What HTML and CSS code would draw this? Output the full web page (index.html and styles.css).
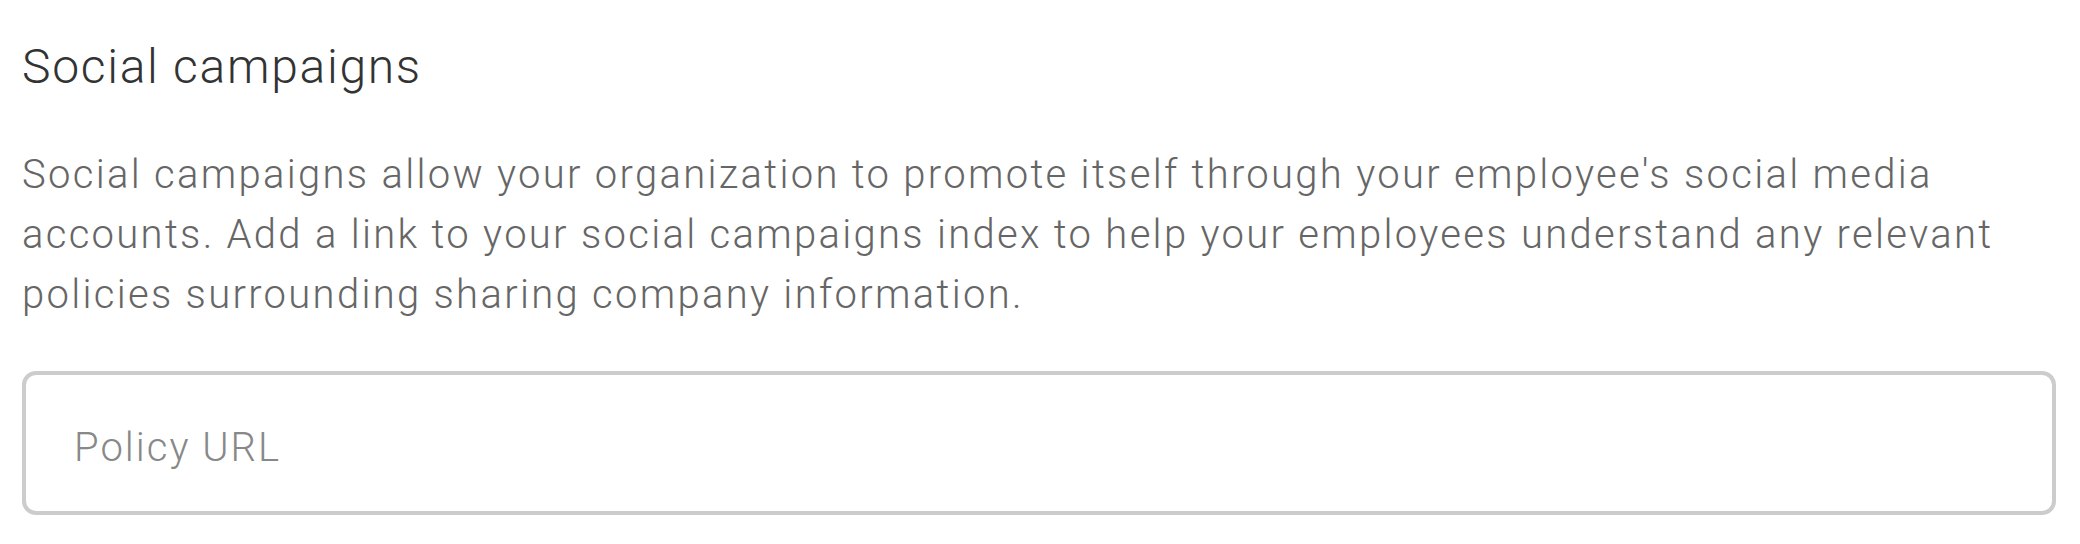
FILE: index.html
```html
<!DOCTYPE html>
<html>
<head>
<meta charset="utf-8">
<link rel="stylesheet" href="styles.css">
</head>
<body>
<section class="panel">
  <h2 class="title">Social campaigns</h2>
  <p class="desc">Social campaigns allow your organization to promote itself through your employee's social media accounts. Add a link to your social campaigns index to help your employees understand any relevant policies surrounding sharing company information.</p>
  <input class="field" type="text" placeholder="Policy URL">
</section>
</body>
</html>
```
FILE: styles.css
```css
html, body {
  margin: 0;
  padding: 0;
  background: #ffffff;
}
.panel {
  padding: 37px 24px 0 22px;
  font-family: Roboto, "Liberation Sans", sans-serif;
  display: flex;
  flex-direction: column;
}
.title {
  margin: 0;
  font-size: 48px;
  line-height: 60px;
  font-weight: 300;
  letter-spacing: 1.7px;
  color: #333333;
}
.desc {
  margin: 48px 0 0 0;
  font-size: 40px;
  line-height: 60px;
  font-weight: 300;
  letter-spacing: 2.3px;
  color: #666666;
  max-width: 2034px;
}
.field {
  margin-top: 46px;
  box-sizing: border-box;
  width: 2034px;
  height: 144px;
  border: 4px solid #cccccc;
  border-radius: 14px;
  padding: 8px 48px 0 48px;
  font-family: Roboto, "Liberation Sans", sans-serif;
  font-size: 40px;
  font-weight: 300;
  letter-spacing: 2px;
  color: #333333;
  outline: none;
  background: #ffffff;
}
.field::placeholder {
  color: #888888;
}
```
